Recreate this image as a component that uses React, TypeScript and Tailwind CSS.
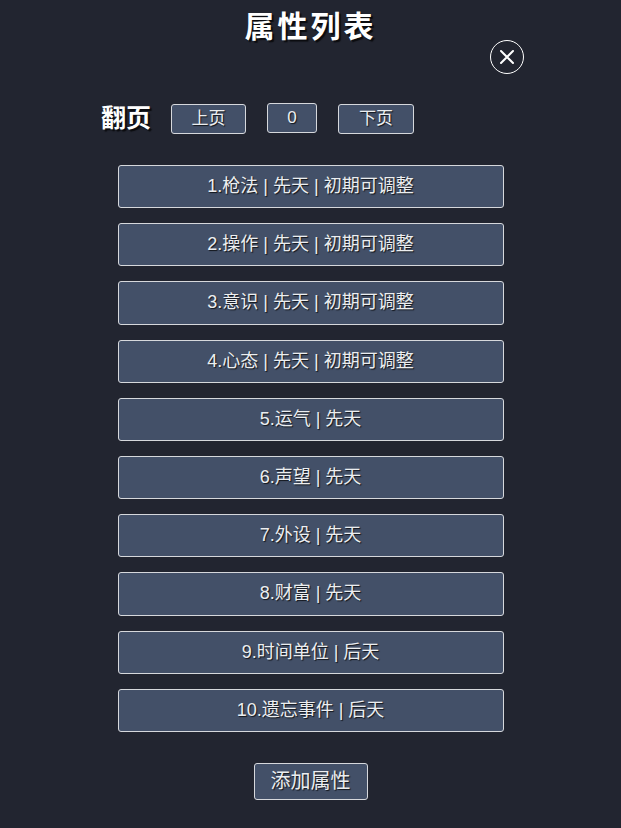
import React from "react";

const items = [
  "1.枪法 | 先天 | 初期可调整",
  "2.操作 | 先天 | 初期可调整",
  "3.意识 | 先天 | 初期可调整",
  "4.心态 | 先天 | 初期可调整",
  "5.运气 | 先天",
  "6.声望 | 先天",
  "7.外设 | 先天",
  "8.财富 | 先天",
  "9.时间单位 | 后天",
  "10.遗忘事件 | 后天",
];

const font = "font-['Liberation_Sans','Noto_Sans_CJK_SC',sans-serif]";
const btn =
  "bg-[#435068] border-[1.5px] border-[#d6d8dc] rounded-[3px] text-[#eceef0] [text-shadow:1px_1px_1px_rgba(0,0,0,0.75)] flex items-center justify-center";

export default function App() {
  return (
    <div className={`${font} w-[621px] h-[828px] bg-[#222530] flex flex-col items-center`}>
      <div className="relative w-full h-[92px] flex justify-center">
        <h1 className="mt-[8px] text-[30px] leading-[38px] font-bold tracking-[3px] text-white [text-shadow:2px_2px_1px_rgba(0,0,0,0.7)]">
          属性列表
        </h1>
        <button className="absolute left-[490px] top-[40px] w-[34px] h-[34px] rounded-full border-[1.5px] border-white flex items-center justify-center">
          <svg width="16" height="16" viewBox="0 0 16 16" fill="none" stroke="white" strokeWidth="2" strokeLinecap="round">
            <path d="M2 2 L14 14 M14 2 L2 14" />
          </svg>
        </button>
      </div>

      <div className="w-full flex items-center pl-[101px] h-[42px] mt-[5px]">
        <span className="text-[25px] font-bold text-white [text-shadow:2px_2px_1px_rgba(0,0,0,0.7)] leading-none mr-[20px]">
          翻页
        </span>
        <button className={`${btn} w-[75px] h-[30px] text-[17px] mr-[21px] mt-[1px]`}>上页</button>
        <button className={`${btn} w-[50px] h-[30px] text-[17px] mr-[21px] -mt-[1px]`}>0</button>
        <button className={`${btn} w-[76px] h-[30px] text-[17px] mt-[1px]`}>下页</button>
      </div>

      <div className="mt-[26px] flex flex-col gap-[15px]">
        {items.map((t) => (
          <button key={t} className={`${btn} w-[386px] h-[43.2px] text-[18px]`}>
            {t}
          </button>
        ))}
      </div>

      <button className={`${btn} mt-[31px] w-[114px] h-[37px] text-[20px]`}>添加属性</button>
    </div>
  );
}
